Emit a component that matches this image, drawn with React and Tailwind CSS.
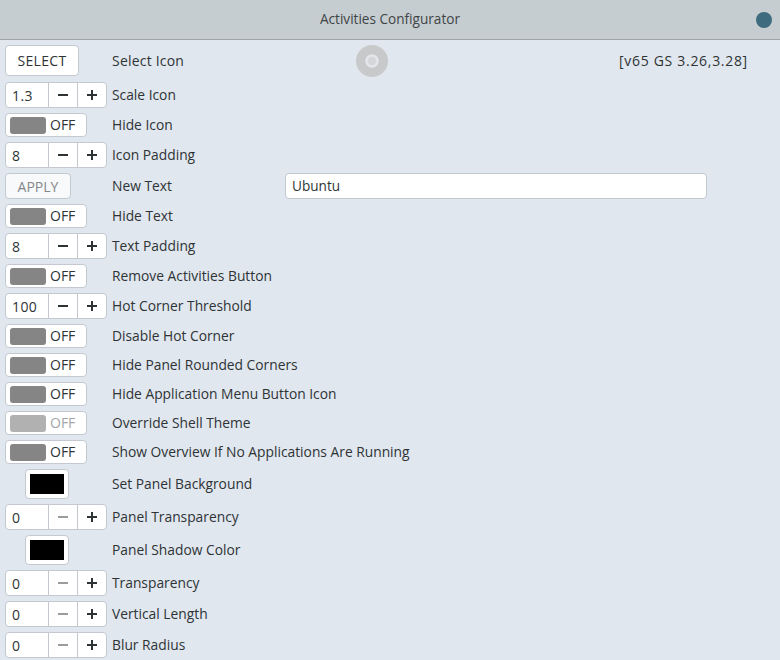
const font = "font-['Open_Sans','Noto_Sans',sans-serif]";

function Label({ children, width }) {
  return <span className={`ml-[5px] text-[13.8px] leading-none whitespace-nowrap ${width || ""}`}>{children}</span>;
}

function Spin({ value, dim }) {
  return (
    <div className="w-[102px] h-[26px] ml-[5px] flex bg-white border border-[#c3c9cf] rounded-[4px] shrink-0">
      <div className="w-[42px] pl-[6px] flex items-center text-[14px] tracking-[0.4px]">{value}</div>
      <div className={`w-[29px] flex items-center justify-center border-l border-[#c3c9cf] ${dim ? "text-[#9a9c9d]" : "text-[#2e3436]"}`}>
        <svg width="10" height="10" viewBox="0 0 10 10"><rect x="0" y="4" width="10" height="2" fill="currentColor" /></svg>
      </div>
      <div className="flex-1 flex items-center justify-center border-l border-[#c3c9cf] text-[#2e3436]">
        <svg width="10" height="10" viewBox="0 0 10 10"><path d="M0 4h4V0h2v4h4v2H6v4H4V6H0z" fill="currentColor" /></svg>
      </div>
    </div>
  );
}

function Toggle({ dim }) {
  return (
    <div className="w-[82px] h-[24px] ml-[5px] pl-[4px] flex items-center gap-[4px] bg-white border border-[#c3c9cf] rounded-[4px] shrink-0">
      <div className={`w-[36px] h-[17px] rounded-[3px] ${dim ? "bg-[#b1b1b1]" : "bg-[#858585]"}`}></div>
      <span className={`text-[14px] leading-none ${dim ? "text-[#a3a5a6]" : ""}`}>OFF</span>
    </div>
  );
}

function Color() {
  return (
    <div className="w-[44px] h-[30px] ml-[25px] mr-[38px] flex items-center justify-center bg-white border border-[#c3c9cf] rounded-[4px] shrink-0">
      <div className="w-[34px] h-[20px] bg-black"></div>
    </div>
  );
}

const rows = [
  { kind: "spin", value: "1.3", label: "Scale Icon" },
  { kind: "toggle", label: "Hide Icon" },
  { kind: "spin", value: "8", label: "Icon Padding" },
  { kind: "apply", label: "New Text" },
  { kind: "toggle", label: "Hide Text" },
  { kind: "spin", value: "8", label: "Text Padding" },
  { kind: "toggle", label: "Remove Activities Button" },
  { kind: "spin", value: "100", label: "Hot Corner Threshold" },
  { kind: "toggle", label: "Disable Hot Corner" },
  { kind: "toggle", label: "Hide Panel Rounded Corners" },
  { kind: "toggle", label: "Hide Application Menu Button Icon" },
  { kind: "toggle", dim: true, label: "Override Shell Theme" },
  { kind: "toggle", label: "Show Overview If No Applications Are Running" },
  { kind: "color", label: "Set Panel Background" },
  { kind: "spin", value: "0", dim: true, label: "Panel Transparency" },
  { kind: "color", label: "Panel Shadow Color" },
  { kind: "spin", value: "0", dim: true, label: "Transparency" },
  { kind: "spin", value: "0", dim: true, label: "Vertical Length" },
  { kind: "spin", value: "0", dim: true, label: "Blur Radius" },
];

export default function App() {
  return (
    <div className={`w-[780px] h-[660px] overflow-hidden bg-[#e1e7ee] text-[#2e3436] ${font}`}>
      <div className="h-[40px] flex items-center justify-center relative bg-[#c6cdd0] border-b border-[#9ea3a7]">
        <span className="text-[13.6px] text-[#3f4547]">Activities Configurator</span>
        <div className="absolute left-[756px] top-[12px] w-[16px] h-[16px] rounded-full bg-[#3e6b7e]"></div>
      </div>

      <div className="flex flex-col gap-[5px] pt-[5px]">
        <div className="h-[32px] flex items-center">
          <div className="w-[74px] h-[31px] ml-[5px] mr-[28px] self-start flex items-center justify-center bg-white border border-[#c3c9cf] rounded-[4px] text-[14px] tracking-[0.3px]">
            SELECT
          </div>
          <span className="w-[244px] ml-[5px] text-[14px] tracking-[0.2px] leading-none">Select Icon</span>
          <svg width="32" height="32" viewBox="0 0 32 32" className="shrink-0">
            <circle cx="16" cy="16" r="16" fill="#c8c9cb" />
            <circle cx="16" cy="16" r="5.5" fill="#d4d6d9" stroke="#e3e6ea" strokeWidth="2.5" />
          </svg>
          <span className="ml-[231px] text-[14px] tracking-[0.7px] leading-none whitespace-nowrap">[v65 GS 3.26,3.28]</span>
        </div>

        {rows.map((row) => (
          <div
            key={row.label}
            className={`flex items-center ${row.kind === "color" ? "h-[30px]" : row.kind === "toggle" ? "h-[24px]" : "h-[26px]"}`}
          >
            {row.kind === "spin" && <Spin value={row.value} dim={row.dim} />}
            {row.kind === "toggle" && (
              <>
                <Toggle dim={row.dim} />
                <div className="w-[20px] shrink-0"></div>
              </>
            )}
            {row.kind === "color" && <Color />}
            {row.kind === "apply" && (
              <div className="w-[66px] h-[26px] ml-[5px] mr-[36px] flex items-center justify-center bg-[#f8f9fb] border border-[#c3c9cf] rounded-[4px] text-[14px] text-[#84888a] shrink-0">
                APPLY
              </div>
            )}
            <Label width={row.kind === "apply" ? "w-[173px]" : ""}>{row.label}</Label>
            {row.kind === "apply" && (
              <div className="w-[422px] h-[26px] pl-[6px] flex items-center bg-white border border-[#c3c9cf] rounded-[4px] text-[13.6px]">
                Ubuntu
              </div>
            )}
          </div>
        ))}
      </div>
    </div>
  );
}
